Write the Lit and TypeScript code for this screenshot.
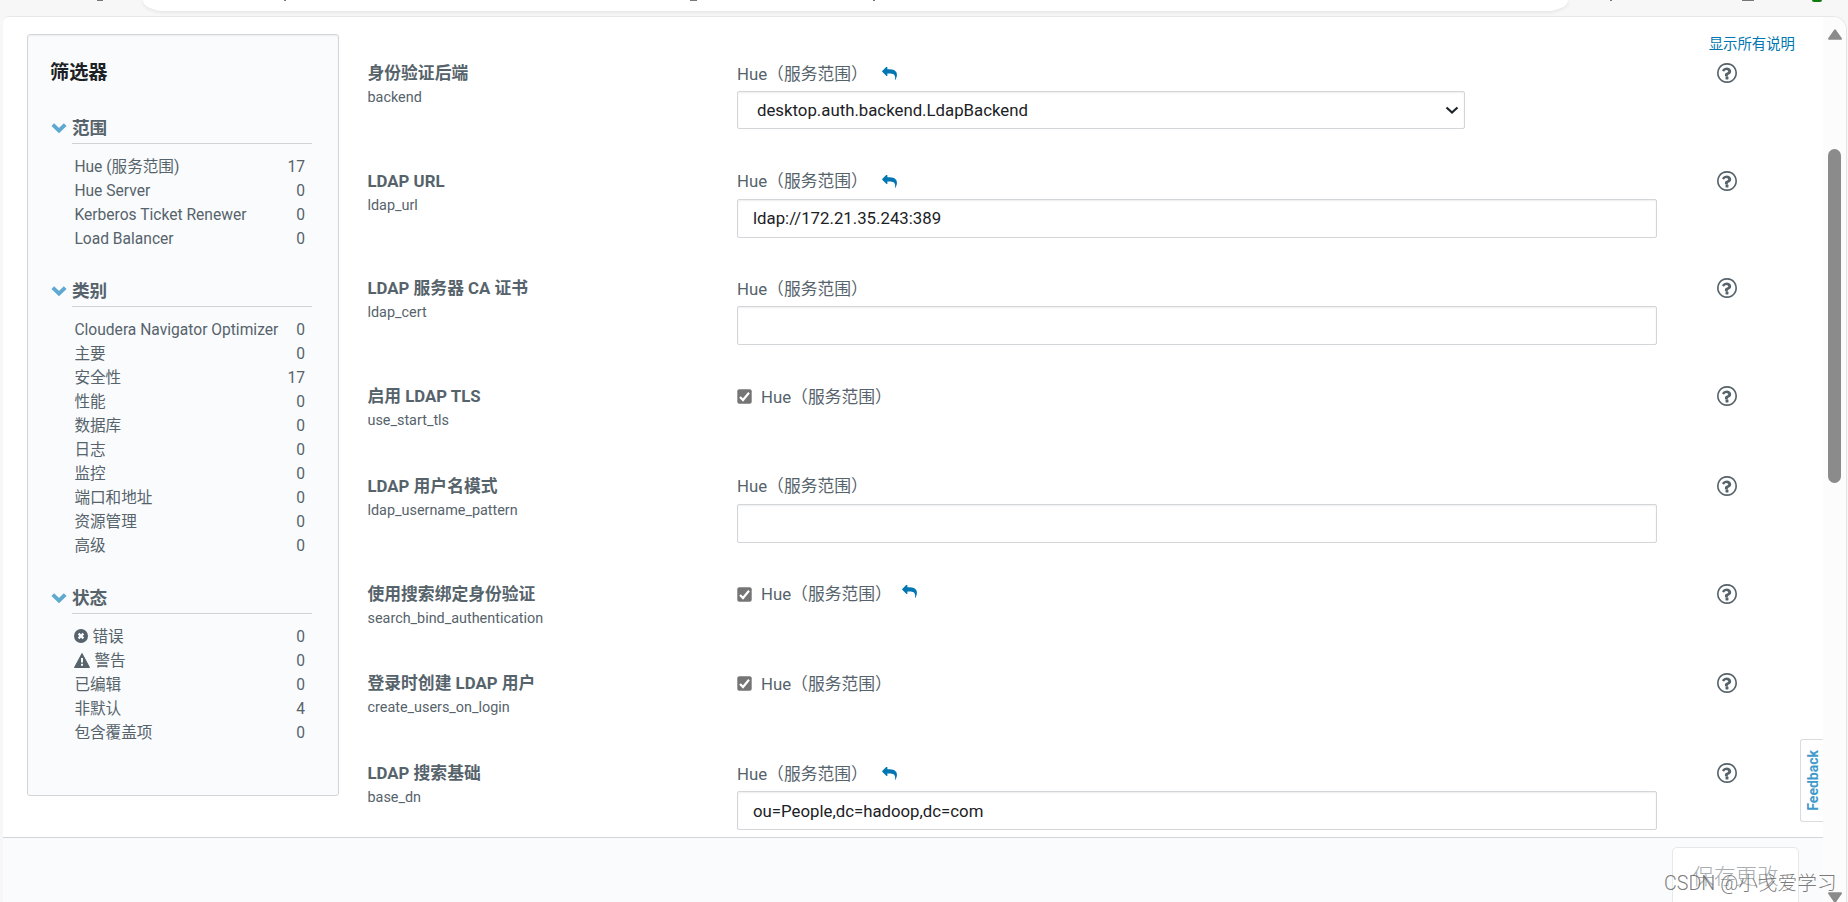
import { LitElement, html, css, nothing } from "lit";
import { customElement } from "lit/decorators.js";

type Row = { label: string; key: string; kind: "select" | "text" | "check"; value?: string; reply?: boolean };

const groups = [
  { name: "范围", items: [["Hue (服务范围)", "17"], ["Hue Server", "0"], ["Kerberos Ticket Renewer", "0"], ["Load Balancer", "0"]] },
  { name: "类别", items: [["Cloudera Navigator Optimizer", "0"], ["主要", "0"], ["安全性", "17"], ["性能", "0"], ["数据库", "0"], ["日志", "0"], ["监控", "0"], ["端口和地址", "0"], ["资源管理", "0"], ["高级", "0"]] },
  { name: "状态", items: [["错误", "0", "err"], ["警告", "0", "warn"], ["已编辑", "0"], ["非默认", "4"], ["包含覆盖项", "0"]] },
];

const rows: Row[] = [
  { label: "身份验证后端", key: "backend", kind: "select", value: "desktop.auth.backend.LdapBackend", reply: true },
  { label: "LDAP URL", key: "ldap_url", kind: "text", value: "ldap://172.21.35.243:389", reply: true },
  { label: "LDAP 服务器 CA 证书", key: "ldap_cert", kind: "text", value: "" },
  { label: "启用 LDAP TLS", key: "use_start_tls", kind: "check" },
  { label: "LDAP 用户名模式", key: "ldap_username_pattern", kind: "text", value: "" },
  { label: "使用搜索绑定身份验证", key: "search_bind_authentication", kind: "check", reply: true },
  { label: "登录时创建 LDAP 用户", key: "create_users_on_login", kind: "check" },
  { label: "LDAP 搜索基础", key: "base_dn", kind: "text", value: "ou=People,dc=hadoop,dc=com", reply: true },
];

const chevron = html`<svg class="chev" width="16" height="12" viewBox="0 0 16 12"><path d="M1.800 2.600 L8 8.600 L14.200 2.600" fill="none" stroke="#5fa9d0" stroke-width="3.900"/></svg>`;
const reply = html`<svg class="reply" width="15" height="13" viewBox="0 0 1792 1568"><path fill="#0076b3" d="M1792 1000q0 166-127 451-3 7-10.500 24t-13.500 30-13 22q-12 17-28 17-15 0-23.500-10t-8.500-25q0-9 2.500-26.500t2.500-23.500q5-68 5-123 0-101-17.500-181t-48.500-138.500-80-101-105.500-69.500-133-42.500-154-21.500-175.500-6h-224v256q0 26-19 45t-45 19-45-19l-512-512q-19-19-19-45t19-45l512-512q19-19 45-19t45 19 19 45v256h224q713 0 875 403 53 134 53 333z"/></svg>`;
const errIcon = html`<svg class="err" width="14" height="14" viewBox="0 0 14 14"><circle cx="7" cy="7" r="7" fill="#56636b"/><path d="M4.600 4.600l4.800 4.800M9.400 4.600l-4.800 4.800" stroke="#fafbfd" stroke-width="2.300"/></svg>`;
const warnIcon = html`<svg class="warn" width="16" height="15" viewBox="0 0 16 15"><path d="M8 0.500 L15.500 14.500 H0.500 Z" fill="#56636b" stroke="#56636b" stroke-width="1" stroke-linejoin="round"/><path d="M8 5v4.500M8 10.800v2" stroke="#fafbfd" stroke-width="2"/></svg>`;
const help = html`<svg class="help" width="20" height="20" viewBox="0 0 1536 1536"><path fill="#56636b" d="M880 1072v160q0 14-9 23t-23 9h-160q-14 0-23-9t-9-23v-160q0-14 9-23t23-9h160q14 0 23 9t9 23zm208-432q0 50-15 90t-45.500 69-52 44-59.500 36q-32 18-46.500 28t-26 24-11.500 29v32q0 14-9 23t-23 9h-160q-14 0-23-9t-9-23v-68q0-35 10.500-64.500t24-47.500 39-35.500 41-25.500 44.500-21q53-25 75-43t22-49q0-42-43.500-71.500t-95.500-29.500q-56 0-95 27-29 20-80 83-9 12-25 12-11 0-19-6l-108-82q-10-7-12-20t5-23q122-192 349-192 129 0 238.500 89.500t109.500 214.500zm-320-512q-130 0-248.500 51t-204 136.500-136.500 204-51 248.500 51 248.500 136.500 204 204 136.500 248.500 51 248.500-51 204-136.500 136.500-204 51-248.500-51-248.500-136.500-204-204-136.500-248.500-51zm768 640q0 209-103 385.500t-279.500 279.500-385.500 103-385.500-103-279.500-279.500-103-385.500 103-385.500 279.500-279.500 385.500-103 385.500 103 279.500 279.500 103 385.500z"/></svg>`;
const box = html`<svg class="box" width="15" height="15" viewBox="0 0 15 15"><rect x=".3" y=".3" width="14.400" height="14.400" rx="2" fill="#757575"/><path d="M3 8l3 3 6-7.200" fill="none" stroke="#fff" stroke-width="2.200"/></svg>`;
const caret = html`<svg width="14" height="9" viewBox="0 0 14 9"><path d="M1.500 1.500L7 6.500l5.500-5" fill="none" stroke="#1c2529" stroke-width="2.200"/></svg>`;

@customElement("app-root")
export class AppRoot extends LitElement {
  static styles = css`
    :host { display: block; width: 1848px; height: 902px; overflow: hidden; position: relative; background: #f7f7f7; color: #56636b;
      font-family: Roboto, "Noto Sans CJK SC", sans-serif; font-size: 16.8px; box-sizing: border-box; }
    * { box-sizing: border-box; }
    svg { display: block; flex: none; }
    .chrome { height: 16px; display: flex; padding-left: 143px; position: relative; overflow: hidden; }
    .omni { width: 1425px; height: 11px; background: #fff; border-radius: 0 0 22px 22px / 0 0 11px 11px; box-shadow: 0 1px 4px rgba(0,0,0,.09); }
    .bit { position: absolute; top: 0; height: 1px; background: #777; }
    .b1 { left: 97px; width: 6px; } .b2 { left: 284px; width: 2px; } .b3 { left: 690px; width: 7px; } .b4 { left: 873px; width: 2px; }
    .b5 { left: 1610px; width: 2px; } .b6 { left: 1742px; width: 12px; } .b7 { left: 1812px; width: 10px; height: 2px; background: #107c10; border-radius: 0 0 5px 5px; }
    .window { margin-left: 3px; width: 1844px; height: 886px; border-top: 1px solid #e8e8e8; border-right: 1px solid #e4e4e4; border-radius: 6px 14px 0 0; background: #fff; display: flex; overflow: hidden; }
    .page { width: 1820px; display: flex; flex-direction: column; flex: none; }
    .main { height: 820px; display: flex; padding: 17px 0 0 24px; overflow: hidden; }
    .side { width: 312px; height: 762px; background: #fafbfd; border: 1px solid #d3d6d9; border-radius: 3px; box-shadow: inset 0 1px 2px rgba(0,0,0,.06); padding: 24px 26px 0 22px; flex: none; }
    h2 { margin: 0; font-size: 19.2px; line-height: 27px; font-weight: 700; color: #1b2125; height: 52px; }
    .group { margin-bottom: 23px; }
    .gh { display: flex; align-items: center; height: 33px; font-size: 17.600px; font-weight: 700; }
    .chev { width: 16px; margin: 1px 5px 0 1px; }
    .gt { flex: 1; height: 33px; line-height: 34px; border-bottom: 1px solid #d0d3d6; }
    ul { list-style: none; margin: 0; padding: 11px 7px 0 24.400px; }
    li { display: flex; align-items: center; height: 24px; line-height: 24px; font-size: 15.600px; white-space: nowrap; }
    li .n { margin-left: auto; }
    .err { margin-right: 4px; margin-top: -2px; } .warn { margin-right: 4px; margin-top: -2px; }
    .content { flex: 1; display: flex; flex-direction: column; padding-left: 28.500px; }
    .top { height: 24.300px; flex: none; padding-right: 28px; margin-top: -1px; margin-bottom: 1px; text-align: right; color: #0076b3; font-size: 14.400px; line-height: 20px; font-family: "Noto Sans CJK SC", sans-serif; }
    .row { display: flex; flex: none; height: 107.600px; }
    .row.check { height: 89.900px; }
    .lab { width: 369.500px; flex: none; padding-top: 3px; }
    .name { font-weight: 700; line-height: 25px; height: 27px; white-space: nowrap; }
    .key { font-size: 14.400px; line-height: 20px; }
    .field { width: 920px; flex: none; padding-top: 2px; }
    .scope { display: flex; align-items: center; height: 25px; white-space: nowrap; }
    .reply { margin-left: 14px; margin-top: 2px; }
    .row.check .reply { margin-left: 10px; margin-top: -3px; }
    .box { margin-right: 9px; margin-top: 2px; }
    .ctl { margin-top: 6px; height: 39px; border: 1px solid #d3d6d9; border-radius: 2px; background: #fff; color: #1b2125; display: flex; align-items: center; padding: 0 15px; box-shadow: inset 0 1px 2px rgba(0,0,0,.07); }
    .ctl.select { width: 728px; height: 38px; padding: 0 5px 0 19px; justify-content: space-between; }
    .help { margin: 5px 0 0 60px; }
    .foot { height: 65px; flex: none; border-top: 1px solid #d3d6d9; background: #fafbfd; display: flex; justify-content: flex-end; padding: 9px 24px 0 0; }
    .save { width: 127px; height: 62px; border: 1px solid #e6e8ea; border-radius: 5px; background: #fff; color: #a9aeb2; font-size: 21.600px; line-height: 58px; text-align: center; font-weight: 300; }
    .bar { width: 23px; flex: none; background: #fcfcfc; display: flex; flex-direction: column; align-items: center; padding: 12px 0 0 0; }
    .thumb { width: 13px; height: 334px; margin-top: 109px; border-radius: 7px; background: #8b8b8b; flex: none; }
    .down { margin-top: 409px; }
    .feedback { position: absolute; left: 1800px; top: 739px; width: 23px; height: 83px; border: 1px solid #d9dcdf; border-right: 0; border-radius: 3px 0 0 3px; background: #fff; color: #3f9acb; font-size: 14px; font-weight: 700; line-height: 24px; writing-mode: vertical-rl; display: flex; justify-content: center; }
    .feedback span { transform: rotate(180deg); text-align: center; margin-right: -2px; }
    .mark { position: absolute; left: 1664px; top: 870px; font-size: 19.700px; line-height: 28px; color: rgba(100,100,100,.85); white-space: nowrap; font-weight: 300; }
  `;

  row(r: Row) {
    return html`<div class="row ${r.kind}">
      <div class="lab"><div class="name">${r.label}</div><div class="key">${r.key}</div></div>
      <div class="field">
        <div class="scope">${r.kind === "check" ? box : nothing}<span>Hue（服务范围）</span>${r.reply ? reply : nothing}</div>
        ${r.kind === "check" ? nothing : html`<div class="ctl ${r.kind}"><span>${r.value}</span>${r.kind === "select" ? caret : nothing}</div>`}
      </div>
      ${help}
    </div>`;
  }

  render() {
    return html`
      <div class="chrome"><div class="omni"></div>${[1, 2, 3, 4, 5, 6, 7].map((n) => html`<i class="bit b${n}"></i>`)}</div>
      <div class="window">
        <div class="page">
          <div class="main">
            <div class="side"><h2>筛选器</h2>
              ${groups.map((g) => html`<div class="group"><div class="gh">${chevron}<div class="gt">${g.name}</div></div>
                <ul>${g.items.map((i) => html`<li>${i[2] === "err" ? errIcon : i[2] === "warn" ? warnIcon : nothing}<span>${i[0]}</span><span class="n">${i[1]}</span></li>`)}</ul></div>`)}
            </div>
            <div class="content"><div class="top">显示所有说明</div>${rows.map((r) => this.row(r))}</div>
          </div>
          <div class="foot"><div class="save">保存更改</div></div>
        </div>
        <div class="bar">
          <svg width="14" height="11" viewBox="0 0 14 11"><path d="M7 1.200L13 9.800H1Z" fill="#8b8b8b" stroke="#8b8b8b" stroke-width="2" stroke-linejoin="round"/></svg>
          <div class="thumb"></div>
          <svg class="down" width="14" height="11" viewBox="0 0 14 11"><path d="M7 9.800L13 1.200H1Z" fill="#8b8b8b" stroke="#8b8b8b" stroke-width="2" stroke-linejoin="round"/></svg>
        </div>
      </div>
      <div class="feedback"><span>Feedback</span></div>
      <div class="mark">CSDN @小戈爱学习</div>`;
  }
}
